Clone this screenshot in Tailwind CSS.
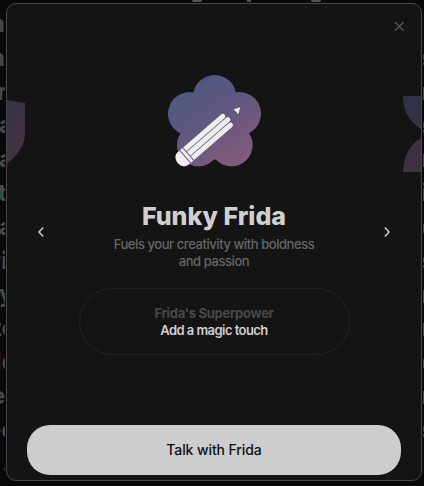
<!DOCTYPE html>
<html lang="en">
<head>
<meta charset="utf-8">
<title>Funky Frida</title>
<script src="https://cdn.jsdelivr.net/npm/@tailwindcss/browser@4"></script>
</head>
<body class="relative h-[486px] w-[424px] overflow-hidden bg-[#090909] font-['Inter','Liberation_Sans',sans-serif]">
<!-- Dimmed page behind the dialog -->
<div class="absolute top-[7px] left-0 w-[5px] overflow-hidden text-[24px] leading-[33.8px] font-bold text-[#494949] opacity-99" aria-hidden="true">
  <div class="flex flex-col items-start whitespace-nowrap"><span class="-ml-[17px]">m</span><span class="-ml-[10px]">n</span><span class="-ml-[3px]">r</span><span class="-ml-px">a</span><span class="-ml-px">a</span><span class="-ml-[2px]">t</span><span class="-ml-px">a</span><span class="-ml-[9px]">ri</span><span class="-ml-px">y</span><span class="-ml-[7px]">to</span><span class="-ml-[5px]">lo</span><span class="-ml-[9px]">e</span><span class="-ml-[13px]">ec</span><span class="ml-[2px]">.</span></div>
</div>
<div class="absolute top-[41px] left-[423px] w-px overflow-hidden text-[24px] leading-[33.8px] font-bold text-[#494949] opacity-99" aria-hidden="true">
  <div class="-ml-[2px] flex flex-col whitespace-nowrap"><span>s</span><span>n</span><span>s</span><span>n</span><span>i</span><span>o</span><span>s</span><span>n</span><span>n</span><span>o</span><span>n</span><span>s</span></div>
</div>
<div class="absolute top-0 left-[192px] flex gap-[45px]"><i class="h-[2px] w-[10px] rounded-b-full bg-[#555]"></i><i class="h-[2px] w-[4px] bg-[#555]"></i><i class="ml-[15px] h-[2px] w-[10px] rounded-b-full bg-[#555]"></i></div>

<main class="relative mt-[3px] ml-[6px] flex h-[478px] w-[416px] flex-col overflow-hidden rounded-[10px] border border-[#484848] bg-[#141414]">
  <header class="flex h-[71px] justify-end pt-[16px] pr-[16px]">
    <button class="size-[12px]" aria-label="Close"><svg viewBox="0 0 12 12" class="size-3" fill="none" stroke="#555" stroke-width="1.3"><path d="M2 2 10.7 10.7M10.7 2 2 10.7"/></svg></button>
  </header>
  <section class="flex h-[96px] items-start justify-between">
    <svg class="mt-[24px] h-[65px] w-[18px]" viewBox="0 0 18 65"><defs><linearGradient id="l" x1="0" y1="0" x2=".4" y2="1"><stop stop-color="#343347"/><stop offset="1" stop-color="#463142"/></linearGradient></defs><path d="M0 1 18 4V34C18 46 11 56 0 64Z" fill="url(#l)"/></svg>
    <svg class="-mt-[10px] ml-[2px] h-[110px] w-[120px]" viewBox="0 0 360 330">
      <defs><linearGradient id="f" gradientUnits="userSpaceOnUse" x1="95" y1="60" x2="255" y2="305"><stop stop-color="#505780"/><stop offset=".45" stop-color="#61587f"/><stop offset="1" stop-color="#865a7b"/></linearGradient></defs>
      <g fill="url(#f)"><circle cx="179" cy="95" r="65"/><circle cx="104" cy="146" r="65"/><circle cx="253" cy="146" r="65"/><circle cx="130" cy="240" r="64"/><circle cx="229" cy="240" r="64"/><path d="M105 146 179 90 254 146 229 240 180 285 130 240Z"/></g>
      <g fill="#eeedf0"><g transform="translate(85 280) rotate(-41)"><path d="M6-25V25H0C-29 25-29-25 0-25ZM9-25H18V25H9Z"/><path d="M21-25H172A7.5 7.5 0 0 1 172-10H21ZM21-7.5H177A7.5 7.5 0 0 1 177 7.5H21ZM21 10H172A7.5 7.5 0 0 1 172 25H21Z"/></g><path d="M236 133 256 127 250 148Z"/></g>
    </svg>
    <svg class="mt-[21px] h-[76px] w-[18px]" viewBox="0 0 18 76"><defs><linearGradient id="r" x1="0" y1="0" x2="0" y2="1"><stop stop-color="#303147"/><stop offset="1" stop-color="#413141"/></linearGradient></defs><path d="M0 0H18V33Q0 22 0 0ZM0 76Q1 52 18 42V76Z" fill="url(#r)"/></svg>
  </section>
  <section class="mt-[29px] flex h-[71px] justify-between pr-[30px] pl-[30px]">
    <button class="mt-[26px] h-[12px] w-[8px]" aria-label="Previous"><svg viewBox="0 0 8 12" fill="none" stroke="#ccc" stroke-width="1.5"><path d="M6.2 1.5 2 6 6.2 10.5"/></svg></button>
    <div class="flex flex-col items-center whitespace-nowrap">
      <h1 class="text-[25px] leading-[32px] font-extrabold text-[#d0d0d0]">Funky Frida</h1>
      <p class="mt-[4px] text-center text-[13px] leading-[17px] font-medium tracking-[-0.43px] text-[#666]">Fuels your creativity with boldness<br>and passion</p>
    </div>
    <button class="mt-[26px] h-[12px] w-[8px]" aria-label="Next"><svg viewBox="0 0 8 12" fill="none" stroke="#ccc" stroke-width="1.5"><path d="M1.8 1.5 6 6 1.8 10.5"/></svg></button>
  </section>
  <section class="mt-[17px] ml-[72px] flex h-[67px] w-[271px] flex-col items-center justify-center rounded-full border border-[#232323] pt-px pr-px text-[13px] leading-[17px] whitespace-nowrap">
    <h2 class="font-bold tracking-[-0.28px] text-[#484848]">Frida's Superpower</h2>
    <p class="font-semibold tracking-[-0.55px] text-[#d0d0d0]">Add a magic touch</p>
  </section>
  <button class="mt-[70px] ml-[20px] h-[50px] w-[374px] shrink-0 rounded-[23px] bg-[#cdcdcd] pb-[2px] text-[14px] font-medium tracking-[-0.1px] text-[#101010]">Talk with Frida</button>
</main>
</body>
</html>
